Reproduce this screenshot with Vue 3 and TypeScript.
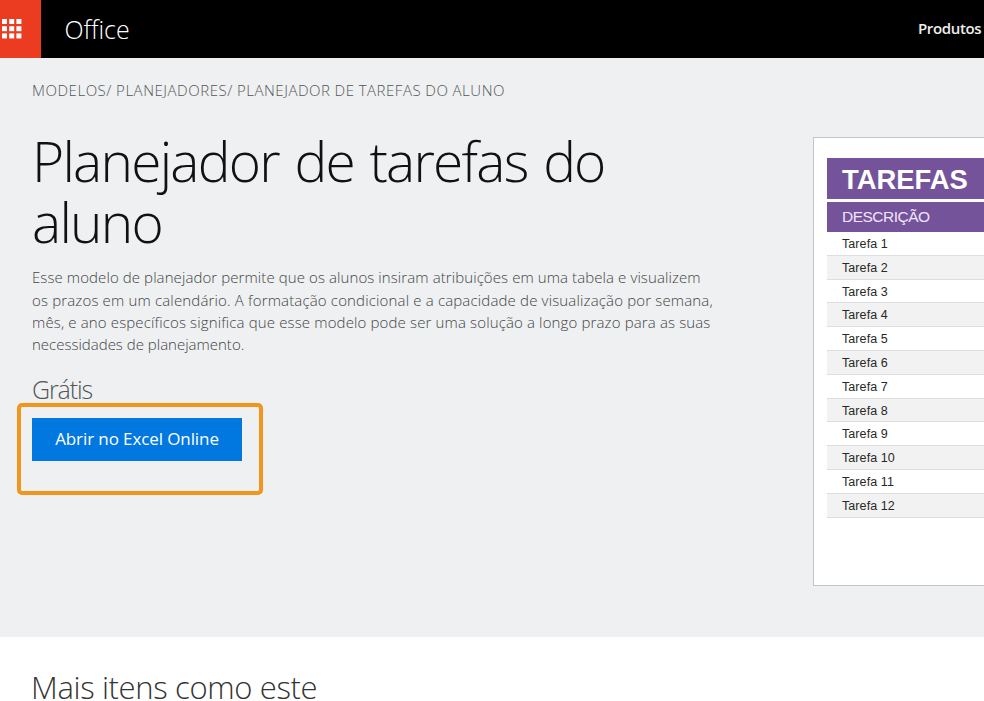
<script setup lang="ts">
const tasks: string[] = Array.from({ length: 12 }, (_, i) => `Tarefa ${i + 1}`)
const description: string[] = [
  'Esse modelo de planejador permite que os alunos insiram atribuições em uma tabela e visualizem',
  'os prazos em um calendário. A formatação condicional e a capacidade de visualização por semana,',
  'mês, e ano específicos significa que esse modelo pode ser uma solução a longo prazo para as suas',
  'necessidades de planejamento.',
]
</script>

<template>
  <div class="page">
    <header class="topbar">
      <button class="launcher" aria-label="Office">
        <svg width="20" height="20" viewBox="0 0 20 20" fill="#fff">
          <template v-for="r in 3" :key="r">
            <rect v-for="c in 3" :key="c" :x="(c - 1) * 7.2" :y="(r - 1) * 7.2" width="5" height="5" />
          </template>
        </svg>
      </button>
      <span class="brand">Office</span>
      <a class="products">Produtos</a>
    </header>

    <main class="hero">
      <section class="info">
        <nav class="crumbs">MODELOS/ PLANEJADORES/ PLANEJADOR DE TAREFAS DO ALUNO</nav>
        <h1>Planejador de tarefas do<br />aluno</h1>
        <p class="description">
          <span v-for="(line, i) in description" :key="i" :class="['line', `l${i}`]">{{ line }}</span>
        </p>
        <div class="price">Grátis</div>
        <div class="highlight">
          <button class="open">Abrir no Excel Online</button>
        </div>
      </section>
      <aside class="preview">
        <div class="sheet-title">TAREFAS</div>
        <div class="sheet-head">DESCRIÇÃO</div>
        <ul>
          <li v-for="t in tasks" :key="t">{{ t }}</li>
        </ul>
      </aside>
    </main>

    <section class="more">
      <h2>Mais itens como este</h2>
    </section>
  </div>
</template>

<style>
body {
  margin: 0;
  overflow: hidden;
}
</style>

<style scoped>
.page {
  width: 984px;
  height: 701px;
  overflow: hidden;
  background: #fff;
  font-family: 'Open Sans', 'Noto Sans', sans-serif;
  font-weight: 300;
  white-space: nowrap;
}
.topbar {
  display: flex;
  align-items: center;
  height: 58px;
  box-sizing: border-box;
  background: #000;
  color: #fff;
}
.launcher {
  display: flex;
  align-items: center;
  width: 41px;
  height: 58px;
  padding: 0 0 0 2px;
  border: 0;
  background: #eb3c22;
}
.brand {
  margin-left: 23.5px;
  padding-bottom: 1px;
  font-size: 25px;
  letter-spacing: -0.05px;
}
.products {
  margin-left: auto;
  width: 66px;
  padding-bottom: 2px;
  font-size: 15px;
  font-weight: 600;
  letter-spacing: -0.35px;
  color: #eee;
}
.hero {
  display: flex;
  justify-content: space-between;
  height: 579px;
  background: #eef0f2;
}
.info {
  padding-left: 32px;
}
.crumbs {
  margin-top: 21px;
  height: 22px;
  line-height: 22px;
  font-size: 15px;
  letter-spacing: 0.53px;
  word-spacing: -0.3px;
  color: #555;
}
h1 {
  margin: 29px 0 0;
  font-size: 55px;
  line-height: 61px;
  font-weight: 300;
  letter-spacing: -1.75px;
  word-spacing: 3px;
  color: #111;
}
.description {
  margin: 14.4px 0 0;
  color: #444;
  font-size: 15px;
}
.line {
  display: block;
  width: max-content;
  height: 22.2px;
  line-height: 22.2px;
}
.l0 {
  letter-spacing: 0.09px;
}
.l1 {
  letter-spacing: 0.16px;
}
.l2 {
  letter-spacing: 0.14px;
}
.price {
  margin-top: 16.6px;
  height: 34px;
  line-height: 34px;
  font-size: 25px;
  letter-spacing: -1.1px;
  color: #555;
}
.highlight {
  width: 246px;
  height: 92px;
  margin: -3px 0 0 -15px;
  padding: 11px 0 0 11px;
  box-sizing: border-box;
  border: 4px solid #f2951d;
  border-radius: 5px;
}
.open {
  display: block;
  width: 210px;
  height: 43px;
  padding: 0 0 2px;
  border: 0;
  background: #0078df;
  color: #fff;
  font: 400 17px 'Open Sans', sans-serif;
  letter-spacing: -0.1px;
}
.preview {
  width: 171px;
  height: 449px;
  margin-top: 79px;
  padding: 20px 0 0 13px;
  box-sizing: border-box;
  border: 1px solid #c2c4c6;
  border-right: 0;
  background: #fff;
  font-family: 'Liberation Sans', Arial, sans-serif;
  font-weight: 400;
}
.sheet-title,
.sheet-head {
  padding-left: 15px;
  background: #75539a;
  color: #fff;
}
.sheet-title {
  height: 41px;
  line-height: 43px;
  font-size: 27.4px;
  font-weight: 700;
}
.sheet-head {
  height: 30px;
  margin-top: 3px;
  line-height: 30px;
  font-size: 15.5px;
  letter-spacing: -0.5px;
  color: #f0e4fb;
}
ul {
  margin: 0;
  padding: 0;
  list-style: none;
}
li {
  height: 23.8px;
  line-height: 24.6px;
  padding-left: 15px;
  box-sizing: border-box;
  border-bottom: 1px solid #dedede;
  font-size: 12.5px;
  letter-spacing: 0.08px;
  color: #282828;
}
li:nth-child(even) {
  background: #f2f2f2;
}
h2 {
  margin: 29px 0 0 31px;
  font-size: 31px;
  line-height: 42px;
  font-weight: 300;
  letter-spacing: -0.35px;
  color: #333;
}
</style>
